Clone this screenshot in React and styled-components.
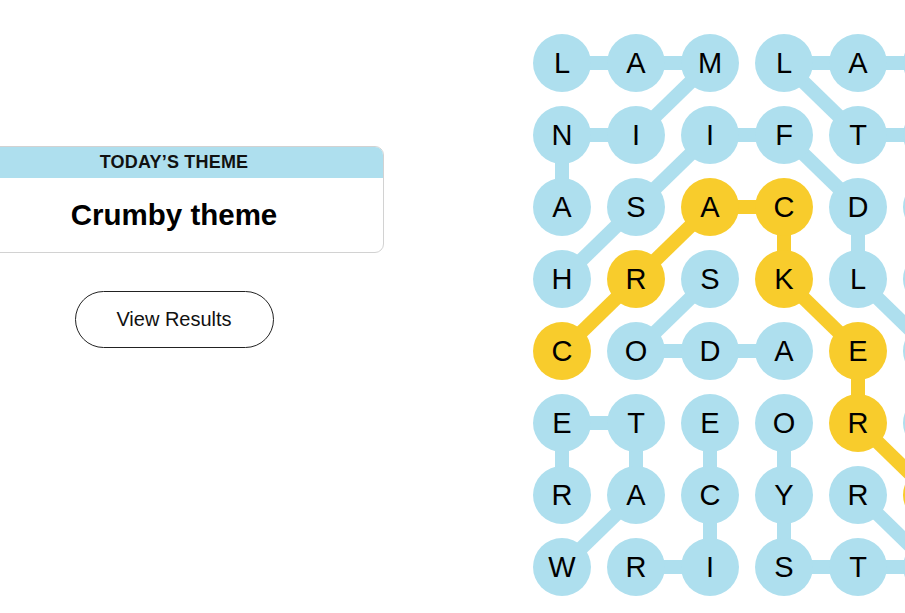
import React from 'react';
import styled, { createGlobalStyle } from 'styled-components';

const CELL = 58;
const COL_GAP = 16;
const ROW_GAP = 14;
const STEP_X = CELL + COL_GAP;
const STEP_Y = CELL + ROW_GAP;
const VISIBLE_COLS = 5;

const rows = [
  'LAMLAS',
  'NIIFTI',
  'ASACDN',
  'HRSKLE',
  'CODAEO',
  'ETEORG',
  'RACYRS',
  'WRISTE',
];

// cells that belong to the spangram
const spangram = [[4, 0], [3, 1], [2, 2], [2, 3], [3, 3], [4, 4], [5, 4], [6, 5]];

// found words, as paths of [row, col]
const words = [
  [[2, 0], [1, 0], [1, 1], [0, 2], [0, 1], [0, 0]],
  [[0, 5], [0, 4], [0, 3], [1, 4], [1, 5], [2, 5], [3, 5]],
  [[3, 0], [2, 1], [1, 2], [1, 3], [2, 4], [3, 4], [4, 5], [5, 5]],
  [[3, 2], [4, 1], [4, 2], [4, 3]],
  [[7, 0], [6, 1], [5, 1], [5, 0], [6, 0]],
  [[7, 1], [7, 2], [6, 2], [5, 2]],
  [[5, 3], [6, 3], [7, 3], [7, 4], [7, 5], [6, 4]],
];

const isSpangram = (r, c) => spangram.some(([a, b]) => a === r && b === c);
const centre = ([r, c]) => [CELL / 2 + c * STEP_X, CELL / 2 + r * STEP_Y];

const GlobalStyle = createGlobalStyle`
  html, body {
    margin: 0;
    padding: 0;
    background: #fff;
    font-family: "Liberation Sans", Arial, sans-serif;
  }
`;

const Page = styled.div`
  display: flex;
  width: 905px;
  height: 613px;
  overflow: hidden;
`;

const Sidebar = styled.aside`
  flex: 0 0 348px;
  min-width: 0;
  width: 348px;
  display: flex;
  flex-direction: column;
  align-items: center;
  padding-top: 146px;
`;

const ThemeCard = styled.section`
  flex: 0 0 auto;
  width: 418px;
  border: 1px solid #d2d2d2;
  border-radius: 9px;
  overflow: hidden;
  background: #fff;
`;

const ThemeLabel = styled.div`
  height: 31px;
  background: #aedfee;
  display: flex;
  align-items: center;
  justify-content: center;
  font-size: 18px;
  font-weight: 700;
  letter-spacing: 0.2px;
  color: #111;
`;

const ThemeTitle = styled.h2`
  margin: 0;
  height: 74px;
  display: flex;
  align-items: center;
  justify-content: center;
  font-size: 29.5px;
  font-weight: 700;
  color: #000;
`;

const ResultsButton = styled.button`
  margin-top: 38px;
  width: 199px;
  height: 57px;
  border: 1px solid #222;
  border-radius: 30px;
  background: #fff;
  font-family: "Liberation Sans", Arial, sans-serif;
  font-size: 20px;
  color: #111;
  cursor: pointer;
`;

const BoardArea = styled.main`
  margin-left: 185px;
  padding-top: 34px;
`;

const Board = styled.div`
  position: relative;
  display: grid;
  grid-template-columns: repeat(6, ${CELL}px);
  grid-auto-rows: ${CELL}px;
  column-gap: ${COL_GAP}px;
  row-gap: ${ROW_GAP}px;
`;

const Links = styled.svg`
  position: absolute;
  left: 0;
  top: 0;
  overflow: visible;
  pointer-events: none;
`;

const Letter = styled.div`
  position: relative;
  display: flex;
  align-items: center;
  justify-content: center;
  border-radius: 50%;
  background: ${(p) => (p.$span ? '#f8cc2c' : '#aedfee')};
  font-size: 29px;
  color: #000;
  line-height: 1;
`;

function Connectors() {
  const lines = [];
  const addPath = (path, colour, key) => {
    for (let i = 1; i < path.length; i++) {
      const [x1, y1] = centre(path[i - 1]);
      const [x2, y2] = centre(path[i]);
      lines.push(
        <line key={`${key}-${i}`} x1={x1} y1={y1} x2={x2} y2={y2} stroke={colour} strokeWidth="14" />
      );
    }
  };
  words.forEach((w, i) => addPath(w, '#aedfee', `w${i}`));
  addPath(spangram, '#f8cc2c', 'span');
  return (
    <Links width={6 * CELL + 5 * COL_GAP} height={8 * CELL + 7 * ROW_GAP}>
      {lines}
    </Links>
  );
}

export default function App() {
  return (
    <>
      <GlobalStyle />
      <Page>
        <Sidebar>
          <ThemeCard>
            <ThemeLabel>TODAY’S THEME</ThemeLabel>
            <ThemeTitle>Crumby theme</ThemeTitle>
          </ThemeCard>
          <ResultsButton>View Results</ResultsButton>
        </Sidebar>
        <BoardArea>
          <Board>
            <Connectors />
            {rows.map((row, r) =>
              row.split('').map((ch, c) => (
                <Letter key={`${r}-${c}`} $span={isSpangram(r, c)} title={ch}>
                  {c < VISIBLE_COLS ? ch : null}
                </Letter>
              ))
            )}
          </Board>
        </BoardArea>
      </Page>
    </>
  );
}
